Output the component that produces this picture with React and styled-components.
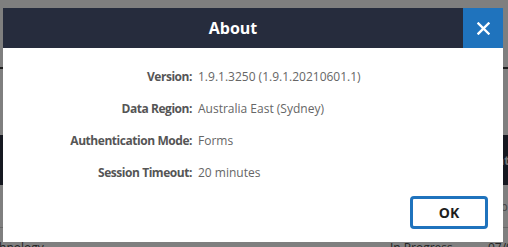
import React from 'react'
import styled, { createGlobalStyle } from 'styled-components'

const GlobalStyle = createGlobalStyle`
  html, body {
    margin: 0;
    padding: 0;
    background: #ffffff;
    font-family: "Open Sans", "Liberation Sans", Arial, sans-serif;
    overflow: hidden;
  }
`

const Page = styled.div`
  width: 508px;
  height: 247px;
  overflow: hidden;
  background: #ffffff;
`

const TopBar = styled.div`
  height: 67px;
  border-bottom: 2px solid #3a3a3a;
`

const Spacer = styled.div`
  height: 66px;
`

const Table = styled.div`
  margin-left: -20px;
  width: 560px;
`

const Row = styled.div`
  display: grid;
  grid-template-columns: 200px 210px 98px 1fr;
  font-size: 12px;
  white-space: nowrap;
`

const HeadRow = styled(Row)`
  height: 50px;
  align-items: center;
  background: #2a3041;
  color: #e8e8e8;
  font-weight: 700;
`

const FilterRow = styled(Row)`
  height: 42px;
  align-items: center;
  border-bottom: 1px solid #cfcfcf;
  color: #8a8a8a;
`

const BodyRow = styled(Row)`
  padding-top: 12px;
  line-height: 16px;
  color: #4a4a4a;
`

const Cell = styled.div`
  padding-left: ${({ pad }) => pad || 0}px;
`

const Overlay = styled.div`
  position: fixed;
  inset: 0;
  background: rgba(0, 0, 0, 0.5);
  display: flex;
  align-items: flex-start;
  padding: 8px 0 0 3px;
`

const Modal = styled.div`
  width: 500px;
  background: #ffffff;
  display: flex;
  flex-direction: column;
`

const Header = styled.div`
  display: flex;
  height: 40px;
  background: #262c3d;
`

const Title = styled.div`
  flex: 1;
  display: flex;
  align-items: center;
  justify-content: center;
  color: #ffffff;
  font-size: 16px;
  font-weight: 700;
`

const CloseButton = styled.button`
  width: 40px;
  height: 40px;
  border: 0;
  padding: 0;
  background: #1f73bd;
  display: flex;
  align-items: center;
  justify-content: center;
  cursor: pointer;
`

const Body = styled.div`
  display: grid;
  grid-template-columns: 189px 1fr;
  column-gap: 6px;
  row-gap: 16px;
  padding-top: 21px;
  font-size: 12px;
  line-height: 16px;
`

const Label = styled.div`
  text-align: right;
  font-weight: 700;
  letter-spacing: -0.45px;
  color: #555555;
  white-space: nowrap;
`

const Value = styled.div`
  color: #666666;
  white-space: nowrap;
`

const Footer = styled.div`
  display: flex;
  justify-content: flex-end;
  padding: 15px 15px 13px;
`

const OkButton = styled.button`
  width: 78px;
  height: 33px;
  border: 3px solid #1f73bd;
  border-radius: 4px;
  background: #ffffff;
  color: #1e1e1e;
  font-family: "Open Sans", "Liberation Sans", Arial, sans-serif;
  font-size: 14px;
  font-weight: 700;
  cursor: pointer;
`

const details = [
  ['Version:', '1.9.1.3250 (1.9.1.20210601.1)'],
  ['Data Region:', 'Australia East (Sydney)'],
  ['Authentication Mode:', 'Forms'],
  ['Session Timeout:', '20 minutes'],
]

const CloseIcon = () => (
  <svg width="13" height="13" viewBox="0 0 13 13">
    <path d="M1.5 1.5 L11.5 11.5 M11.5 1.5 L1.5 11.5" stroke="#ffffff" strokeWidth="2.4" strokeLinecap="square" />
  </svg>
)

const App = () => {
  return (
    <>
      <GlobalStyle />
      <Page>
        <TopBar />
        <Spacer />
        <Table>
          <HeadRow>
            <Cell pad={40}>Category</Cell>
            <Cell>Name</Cell>
            <Cell>Status</Cell>
            <Cell>Date</Cell>
          </HeadRow>
          <FilterRow>
            <Cell />
            <Cell />
            <Cell />
            <Cell pad={-3}>Type</Cell>
          </FilterRow>
          <BodyRow>
            <Cell>Technology</Cell>
            <Cell />
            <Cell>In Progress</Cell>
            <Cell>07/06/2021</Cell>
          </BodyRow>
        </Table>
      </Page>
      <Overlay>
        <Modal>
          <Header>
            <Title>About</Title>
            <CloseButton aria-label="Close">
              <CloseIcon />
            </CloseButton>
          </Header>
          <Body>
            {details.map(([label, value]) => (
              <React.Fragment key={label}>
                <Label>{label}</Label>
                <Value>{value}</Value>
              </React.Fragment>
            ))}
          </Body>
          <Footer>
            <OkButton>OK</OkButton>
          </Footer>
        </Modal>
      </Overlay>
    </>
  )
}

export default App
